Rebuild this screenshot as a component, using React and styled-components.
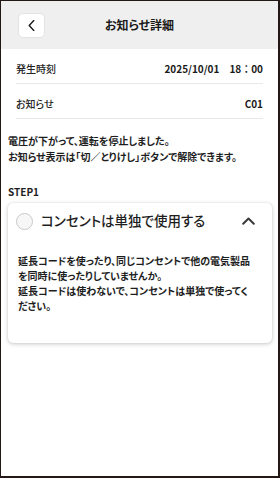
import React from "react";
import styled, { createGlobalStyle } from "styled-components";

const Global = createGlobalStyle`
  html, body { margin: 0; padding: 0; background: #ffffff; }
  body {
    font-family: "Noto Sans CJK JP", "Noto Sans", sans-serif;
    color: #1e1e1e;
    -webkit-font-smoothing: antialiased;
  }
  * { box-sizing: border-box; }
`;

const Frame = styled.div`
  width: 280px;
  height: 478px;
  border-style: solid;
  border-color: #231815;
  border-width: 1px 2px 2px 1px;
  background: #ffffff;
  display: flex;
  flex-direction: column;
  overflow: hidden;
  font-feature-settings: "palt";
`;

const Header = styled.header`
  height: 48px;
  background: #efefef;
  display: grid;
  grid-template-columns: 1fr auto 1fr;
  align-items: center;
  padding: 0 16px;
`;

const BackButton = styled.button`
  width: 27px;
  height: 25px;
  margin-left: 1px;
  border: 1px solid #e3e3e3;
  border-radius: 5px;
  background: #ffffff;
  display: flex;
  align-items: center;
  justify-content: center;
  padding: 0;
  justify-self: start;
`;

const Title = styled.h1`
  margin: 0;
  font-size: 12px;
  font-weight: 700;
  color: #1a1a1a;
  line-height: 1;
`;

const InfoList = styled.div`
  padding: 0 15px;
`;

const InfoRow = styled.div`
  height: 35px;
  padding-top: 4px;
  display: flex;
  align-items: center;
  justify-content: space-between;
  border-bottom: 1px solid #e8e8e8;
`;

const InfoLabel = styled.span`
  font-size: 10px;
  font-weight: 500;
  color: #222;
`;

const InfoValue = styled.span`
  font-size: 10px;
  font-weight: 700;
  color: #1a1a1a;
  font-feature-settings: normal;
`;

const Content = styled.div`
  padding: 14px 6px 0 7px;
  display: flex;
  flex-direction: column;
`;

const Message = styled.p`
  margin: 0;
  font-size: 10px;
  font-weight: 700;
  line-height: 16px;
  color: #1e1e1e;
`;

const StepLabel = styled.div`
  margin-top: 20px;
  font-size: 10px;
  font-weight: 700;
  line-height: 14px;
  color: #1e1e1e;
`;

const Card = styled.section`
  margin-top: 4px;
  background: #ffffff;
  border-radius: 5px;
  box-shadow: 0 1px 4px rgba(0, 0, 0, 0.22), 0 0 1px rgba(0, 0, 0, 0.12);
  padding: 9px 17px 30px 8px;
`;

const CardHeader = styled.div`
  display: flex;
  align-items: center;
  height: 18px;
`;

const Radio = styled.span`
  width: 17px;
  height: 17px;
  border-radius: 50%;
  border: 1px solid #c9c9c9;
  background: #f7f7f7;
  flex: none;
`;

const CardTitle = styled.span`
  margin-left: 8px;
  flex: 1;
  font-size: 13.5px;
  font-weight: 500;
  color: #1e1e1e;
  line-height: 1;
`;

const CardBody = styled.p`
  margin: 23px 0 0 2px;
  font-size: 10px;
  font-weight: 700;
  line-height: 15px;
  color: #1e1e1e;
`;

const ChevronLeft = () => (
  <svg width="7" height="11" viewBox="0 0 7 11" fill="none">
    <path d="M5.8 0.6L1.2 5.5L5.8 10.4" stroke="#1a1a1a" strokeWidth="1.4" strokeLinecap="round" strokeLinejoin="round" />
  </svg>
);

const ChevronUp = () => (
  <svg width="13" height="8" viewBox="0 0 13 8" fill="none">
    <path d="M1.2 6.8L6.5 1.5L11.8 6.8" stroke="#3a3a3a" strokeWidth="2" strokeLinecap="round" strokeLinejoin="round" />
  </svg>
);

export default function App() {
  return (
    <>
      <Global />
      <Frame>
        <Header>
          <BackButton aria-label="戻る">
            <ChevronLeft />
          </BackButton>
          <Title>お知らせ詳細</Title>
          <span />
        </Header>
        <InfoList>
          <InfoRow>
            <InfoLabel>発生時刻</InfoLabel>
            <InfoValue>2025/10/01　18：00</InfoValue>
          </InfoRow>
          <InfoRow>
            <InfoLabel>お知らせ</InfoLabel>
            <InfoValue>C01</InfoValue>
          </InfoRow>
        </InfoList>
        <Content>
          <Message>
            電圧が下がって、運転を停止しました。
            <br />
            お知らせ表示は「切／とりけし」ボタンで解除できます。
          </Message>
          <StepLabel>STEP1</StepLabel>
          <Card>
            <CardHeader>
              <Radio />
              <CardTitle>コンセントは単独で使用する</CardTitle>
              <ChevronUp />
            </CardHeader>
            <CardBody>
              延長コードを使ったり、同じコンセントで他の電気製品を同時に使ったりしていませんか。
              <br />
              延長コードは使わないで、コンセントは単独で使ってください。
            </CardBody>
          </Card>
        </Content>
      </Frame>
    </>
  );
}
